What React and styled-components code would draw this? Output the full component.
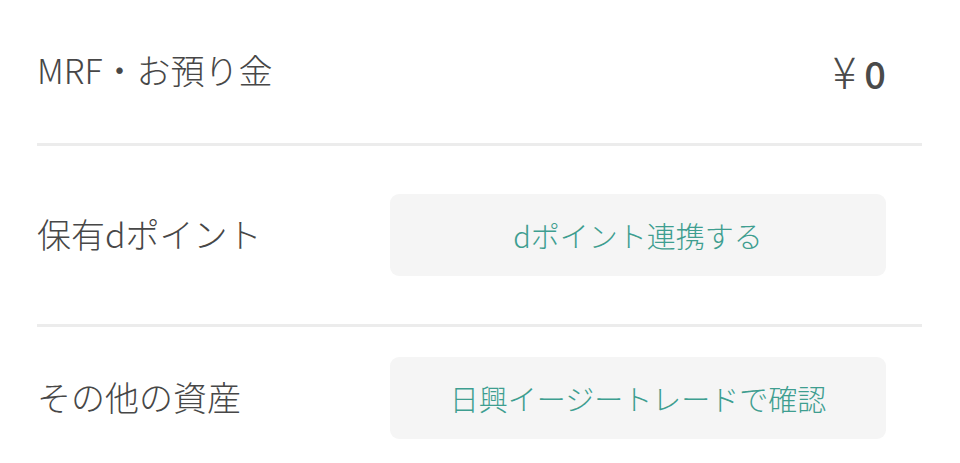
import React from "react";
import styled, { createGlobalStyle } from "styled-components";

const GlobalStyle = createGlobalStyle`
  html, body {
    margin: 0;
    padding: 0;
    background: #ffffff;
    overflow: hidden;
  }
  body {
    font-family: "Noto Sans CJK JP", "Noto Sans", sans-serif;
    color: #4b4b4b;
  }
`;

const rows = [
  { label: "MRF・お預り金", amount: "0", height: 146 },
  { label: "保有dポイント", action: "dポイント連携する", height: 181 },
  { label: "その他の資産", action: "日興イージートレードで確認", height: 142 },
];

const App = () => {
  return (
    <>
      <GlobalStyle />
      <List>
        {rows.map((row, i) => (
          <Item key={row.label} $height={row.height} $divider={i < rows.length - 1}>
            <Label>{row.label}</Label>
            {row.amount !== undefined ? (
              <Amount>
                <Yen>¥</Yen>
                <Value>{row.amount}</Value>
              </Amount>
            ) : (
              <ActionButton type="button">{row.action}</ActionButton>
            )}
          </Item>
        ))}
      </List>
    </>
  );
};

export default App;

const List = styled.div`
  display: flex;
  flex-direction: column;
  padding: 0 38px 0 37px;
`;

const Item = styled.div`
  height: ${(p) => p.$height}px;
  display: flex;
  align-items: center;
  justify-content: space-between;
  padding-right: 36px;
  box-sizing: border-box;
  border-bottom: ${(p) => (p.$divider ? "3px solid #ececec" : "none")};
  flex-shrink: 0;
`;

const Label = styled.div`
  font-size: 34px;
  font-weight: 300;
  line-height: 1;
  color: #474747;
  margin-top: -3px;
`;

const Amount = styled.div`
  display: flex;
  align-items: baseline;
  gap: 8px;
  color: #4a4a4a;
  margin-top: -3px;
`;

const Yen = styled.span`
  font-size: 44px;
  font-weight: 300;
  line-height: 1;
`;

const Value = styled.span`
  font-size: 38px;
  font-weight: 500;
  line-height: 1;
`;

const ActionButton = styled.button`
  width: 496px;
  height: 82px;
  border: none;
  border-radius: 9px;
  background: #f5f5f5;
  color: #3e9e90;
  font-family: "Noto Sans CJK JP", "Noto Sans", sans-serif;
  font-size: 29px;
  font-weight: 300;
  display: flex;
  align-items: center;
  justify-content: center;
  padding: 0;
  cursor: pointer;
`;
